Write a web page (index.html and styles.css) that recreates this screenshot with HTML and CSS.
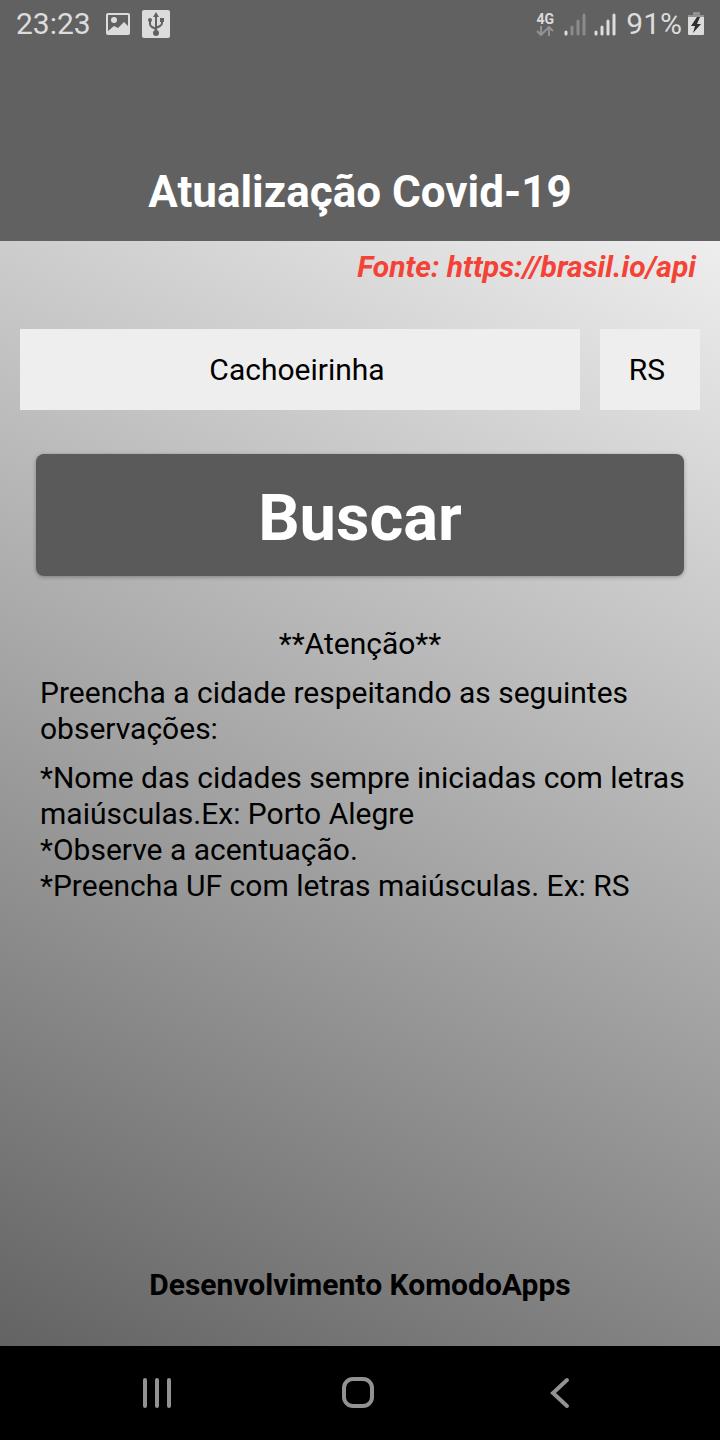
FILE: index.html
```html
<!DOCTYPE html>
<html lang="pt-BR">
<head>
    <meta charset="UTF-8">
    <meta name="viewport" content="width=device-width, initial-scale=1.0">
    <title>Atualização Covid-19</title>
    <link rel="stylesheet" href="styles.css">
</head>
<body>
    <header class="header">
        <div class="status-bar">
            <div class="status-left">
                <span class="clock">23:23</span>
                <!-- imagem -->
                <svg width="24" height="22" viewBox="0 0 24 22">
                    <path fill="#dcdcdc" fill-rule="evenodd" d="M2 0h20a2 2 0 0 1 2 2v18a2 2 0 0 1-2 2H2a2 2 0 0 1-2-2V2a2 2 0 0 1 2-2zM2 2v16l6-5 4 2 6-6 4 4V2z"/>
                    <circle cx="8" cy="7" r="3" fill="#dcdcdc"/>
                </svg>
                <!-- usb -->
                <svg width="28" height="28" viewBox="0 0 28 28">
                    <rect width="28" height="28" rx="2" fill="#dcdcdc"/>
                    <g fill="none" stroke="#616161" stroke-width="2">
                        <path d="M14 5v18M8 11v3q0 2 2 3l4 2M20 10v3q0 2-2 3l-4 2"/>
                    </g>
                    <path fill="#616161" d="M14 2l3 5h-6zM18 8h4v4h-4z"/>
                    <circle cx="8" cy="10" r="2" fill="#616161"/>
                    <circle cx="14" cy="23" r="3" fill="#616161"/>
                </svg>
            </div>
            <div class="status-right">
                <div class="network">
                    <span>4G</span>
                    <svg width="18" height="10" viewBox="0 0 18 10" fill="none" stroke="#929292" stroke-width="2">
                        <path d="M5 0v8M1 5l4 4 4-4M13 10V2M9 5l4-4 4 4"/>
                    </svg>
                </div>
                <!-- sinal dos dois chips -->
                <div class="signals">
                    <svg width="22" height="23" viewBox="0 0 22 23" stroke-width="3" stroke-linecap="round">
                        <path stroke="#dcdcdc" d="M2 19v2"/>
                        <path stroke="#8b8b8b" d="M8 14v7M14 8v13M20 2v19"/>
                    </svg>
                    <svg width="22" height="23" viewBox="0 0 22 23" stroke-width="3" stroke-linecap="round">
                        <path stroke="#dcdcdc" d="M2 19v2M8 14v7M14 8v13M20 2v19"/>
                    </svg>
                </div>
                <span>91%</span>
                <!-- bateria -->
                <svg width="16" height="24" viewBox="0 0 16 24">
                    <path fill="#929292" d="M5 0h7v3h4v3H0V3h5z"/>
                    <path fill="#dcdcdc" d="M0 5h16v17a1 1 0 0 1-1 1H1a1 1 0 0 1-1-1z"/>
                    <path fill="#2e2e2e" d="M9 5L3 14h4l-2 7 8-9H9l3-7z"/>
                </svg>
            </div>
        </div>
        <h1>Atualização Covid-19</h1>
    </header>

    <main class="content">
        <p class="source">Fonte: https://brasil.io/api</p>

        <form class="search">
            <div class="fields">
                <input type="text" class="city" name="cidade" value="Cachoeirinha" aria-label="Cidade">
                <input type="text" class="state" name="uf" value="RS" maxlength="2" aria-label="UF">
            </div>
            <button type="submit" class="search-button">Buscar</button>
        </form>

        <section class="notes">
            <p class="warning">**Atenção**</p>
            <p class="note">Preencha a cidade respeitando as seguintes observações:</p>
            <p class="note">
                *Nome das cidades sempre iniciadas com letras maiúsculas.Ex: Porto Alegre<br>
                *Observe a acentuação.<br>
                *Preencha UF com letras maiúsculas. Ex: RS
            </p>
        </section>

        <footer class="credits">Desenvolvimento KomodoApps</footer>
    </main>

    <nav class="nav-bar">
        <button type="button" aria-label="Recentes">
            <svg width="36" height="36" viewBox="0 0 36 36" fill="none" stroke="#929292" stroke-width="4" stroke-linecap="round">
                <path d="M6 5v26M18 5v26M30 5v26"/>
            </svg>
        </button>
        <button type="button" aria-label="Início">
            <svg width="36" height="36" viewBox="0 0 36 36" fill="none" stroke="#929292" stroke-width="4">
                <rect x="4" y="4" width="28" height="27" rx="9"/>
            </svg>
        </button>
        <button type="button" aria-label="Voltar">
            <svg width="36" height="36" viewBox="0 0 36 36" fill="none" stroke="#929292" stroke-width="4" stroke-linecap="round">
                <path d="M26 5L12 18l14 13"/>
            </svg>
        </button>
    </nav>
</body>
</html>
```

FILE: styles.css
```css
* {
    box-sizing: border-box;
}

body {
    margin: 0;
    min-height: 100vh;
    display: flex;
    flex-direction: column;
    font-family: Roboto, sans-serif;
    font-size: 30px;
    line-height: 36px;
    color: black;
}

h1, p {
    margin: 0;
}

svg {
    display: block;
}

.header {
    background: #616161;
    color: white;
    text-align: center;
    padding-bottom: 23px;
}

.status-bar {
    display: flex;
    justify-content: space-between;
    align-items: center;
    height: 48px;
    padding: 0 16px;
    color: #dcdcdc;
}

.status-left {
    display: flex;
    align-items: center;
    gap: 12px;
}

.clock {
    margin-right: 3px;
}

.status-right {
    display: flex;
    align-items: center;
    gap: 6px;
}

.network {
    display: flex;
    flex-direction: column;
    align-items: center;
    margin-right: 4px;
    font-size: 14px;
    font-weight: bold;
    line-height: 14px;
}

.signals {
    display: flex;
    gap: 8px;
    margin-right: 4px;
}

h1 {
    margin-top: 118px;
    font-size: 44px;
    line-height: 52px;
}

.content {
    flex: 1;
    display: flex;
    flex-direction: column;
    background: linear-gradient(26deg, #636363, #eeeeee);
}

.source {
    padding: 8px 24px;
    color: #f44336;
    font-weight: bold;
    font-style: italic;
    text-align: right;
}

.search {
    padding: 36px 20px 0;
}

.fields {
    display: flex;
    gap: 20px;
}

input {
    height: 81px;
    padding: 0 6px 0 0;
    border: none;
    background: #eeeeee;
    color: black;
    font: inherit;
    text-align: center;
}

.city {
    flex: 1;
    min-width: 0;
}

.state {
    width: 100px;
}

.search-button {
    display: block;
    width: calc(100% - 32px);
    height: 122px;
    margin: 44px auto 0;
    padding: 6px 0 0;
    border: none;
    border-radius: 8px;
    background: #5a5a5b;
    box-shadow: 0 1px 4px rgba(0, 0, 0, 0.3);
    color: white;
    font: bold 65px Roboto, sans-serif;
}

.notes {
    display: flex;
    flex-direction: column;
    gap: 13px;
    padding: 50px 32px 0;
}

.warning {
    text-align: center;
}

.note {
    margin-left: 8px;
}

.credits {
    margin-top: auto;
    padding-bottom: 43px;
    font-weight: bold;
    text-align: center;
}

.nav-bar {
    display: flex;
    justify-content: center;
    align-items: center;
    gap: 165px;
    height: 94px;
    padding-right: 4px;
    background: black;
}

.nav-bar button {
    padding: 0;
    border: none;
    background: none;
}
```
